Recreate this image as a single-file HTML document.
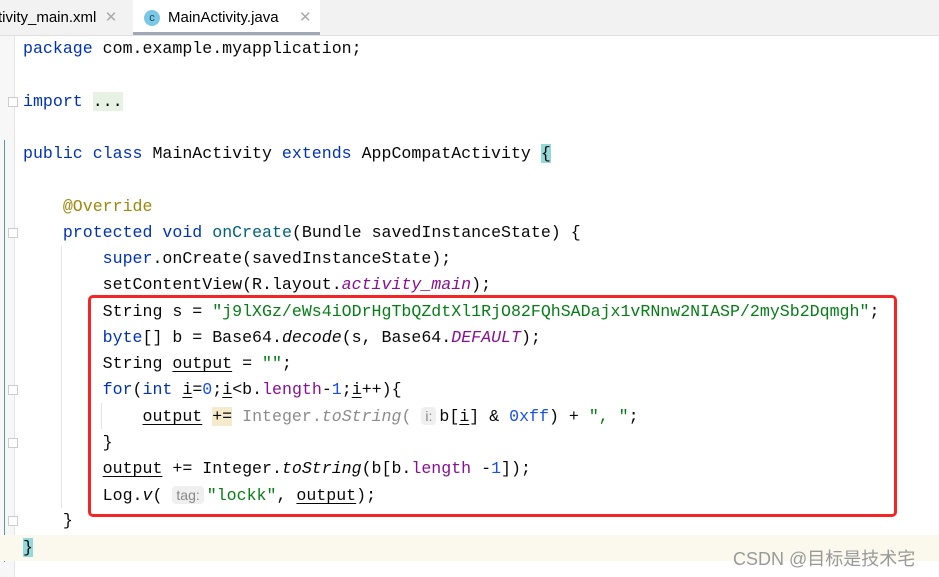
<!DOCTYPE html>
<html><head><meta charset="utf-8"><style>
body{margin:0;width:939px;height:577px;overflow:hidden;background:#fff;position:relative;font-family:"Liberation Mono",monospace;}
.tabs{position:absolute;left:0;top:0;width:939px;height:35px;background:#f2f2f2;border-bottom:1px solid #e0e0e0;font-family:"Liberation Sans",sans-serif;font-size:15px;color:#000;}
.tab{position:absolute;top:0;height:35px;line-height:36px;}
.x{color:#aaa;font-size:15px;}
.gut{position:absolute;left:0;top:36px;width:14px;height:541px;background:#f7f7f7;border-right:1px solid #e4e4e4;}
.l{position:absolute;left:23px;height:26px;line-height:26px;font-size:16.6px;white-space:pre;color:#080808;}
.k{color:#0033b3}.s{color:#067d17}.p{color:#871094}.n{color:#1750eb}.a{color:#9e880d}.g{color:#8c8c8c}
.i{font-style:italic}.u{text-decoration:underline;text-underline-offset:3px}
.hint{background:#efefef;color:#888;font-family:"Liberation Sans",sans-serif;font-size:14px;border-radius:4px;padding:1px 4px;margin-right:3px;}
.fold{position:absolute;left:8px;width:10px;height:10px;border:1px solid #ccc;background:#fff;box-sizing:border-box}
</style></head><body>
<div class="tabs">
<div class="tab" style="left:-2px">tivity_main.xml <span class="x">&nbsp;✕</span></div>
<div class="tab" style="left:133px;width:187px;background:#fff;border-bottom:3px solid #a0a8b8;height:32px;">
<span style="position:absolute;left:11px;top:10px;width:16px;height:16px;border-radius:50%;background:#7ac8e6;color:#245;font-size:11px;line-height:16px;text-align:center">c</span>
<span style="position:absolute;left:35px;top:0">MainActivity.java</span><span class="x" style="position:absolute;left:166px;top:0">✕</span></div>
</div>
<div class="gut"></div>
<div style="position:absolute;left:4px;top:140px;width:1px;height:422px;background:#5a9a9a"></div>
<div style="position:absolute;left:0;top:535px;width:939px;height:26px;background:#fbf9ee"></div>
<div class="fold" style="top:97px"></div>
<div class="fold" style="top:228px"></div>
<div class="fold" style="top:385px"></div>
<div class="fold" style="top:438px"></div>
<div class="fold" style="top:516px"></div>
<div style="position:absolute;left:61px;top:246px;width:1px;height:262px;background:#e4e4e4"></div>
<div style="position:absolute;left:101px;top:403px;width:1px;height:26px;background:#e4e4e4"></div>

<div class="l" style="top:36px"><span class="k">package</span> com.example.myapplication;</div>
<div class="l" style="top:89px"><span class="k">import</span> <span style="background:#e8f2e4">...</span></div>
<div class="l" style="top:141px"><span class="k">public class</span> MainActivity <span class="k">extends</span> AppCompatActivity <span style="background:#93d9d9">{</span></div>
<div class="l" style="top:194px"><span class="a">    @Override</span></div>
<div class="l" style="top:220px">    <span class="k">protected void</span> <span style="color:#00627a">onCreate</span>(Bundle savedInstanceState) {</div>
<div class="l" style="top:246px">        <span class="k">super</span>.onCreate(savedInstanceState);</div>
<div class="l" style="top:272px">        setContentView(R.layout.<span class="p i">activity_main</span>);</div>
<div class="l" style="top:299px">        String s = <span class="s">"j9lXGz/eWs4iODrHgTbQZdtXl1RjO82FQhSADajx1vRNnw2NIASP/2mySb2Dqmgh"</span>;</div>
<div class="l" style="top:325px">        <span class="k">byte</span>[] b = Base64.<span class="i">decode</span>(s, Base64.<span class="p i">DEFAULT</span>);</div>
<div class="l" style="top:351px">        String <span class="u">output</span> = <span class="s">""</span>;</div>
<div class="l" style="top:377px">        <span class="k">for</span>(<span class="k">int</span> <span class="u">i</span>=<span class="n">0</span>;<span class="u">i</span>&lt;b.<span class="p">length</span>-<span class="n">1</span>;<span class="u">i</span>++){</div>
<div class="l" style="top:403px">            <span class="u">output</span> <span style="background:#f5eacc">+=</span> <span class="g">Integer.<span class="i">toString</span>(</span> <span class="hint">i:</span>b[<span class="u">i</span>] &amp; <span class="n">0xff</span>) + <span class="s">", "</span>;</div>
<div class="l" style="top:430px">        }</div>
<div class="l" style="top:456px">        <span class="u">output</span> += Integer.<span class="i">toString</span>(b[b.<span class="p">length</span> -<span class="n">1</span>]);</div>
<div class="l" style="top:482px">        Log.<span class="i">v</span>( <span class="hint">tag:</span><span class="s">"lockk"</span>, <span class="u">output</span>);</div>
<div class="l" style="top:508px">    }</div>
<div class="l" style="top:535px"><span style="background:#93d9d9">}</span></div>

<div style="position:absolute;left:88px;top:295px;width:803px;height:216px;border:3px solid #f52525;border-radius:5px"></div>
<div style="position:absolute;left:733px;top:545px;font-family:'Liberation Sans','Noto Sans CJK SC',sans-serif;font-size:18px;color:#999">CSDN @目标是技术宅</div>
</body></html>
